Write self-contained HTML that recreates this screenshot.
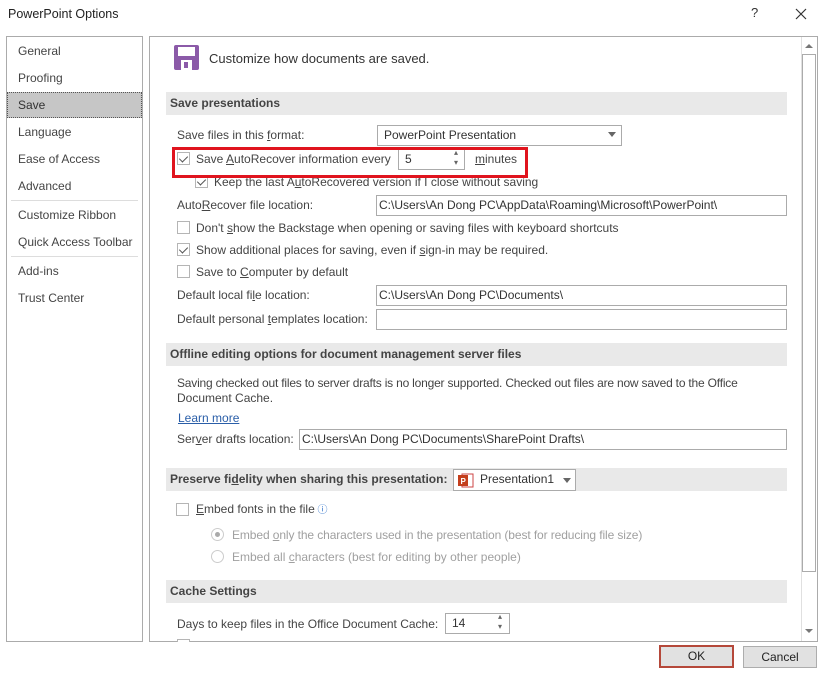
<!DOCTYPE html>
<html><head><meta charset="utf-8"><style>
*{box-sizing:border-box;margin:0;padding:0}
body{width:823px;height:674px;background:#fff;position:relative;overflow:hidden;font-family:"Liberation Sans",sans-serif;font-size:12px;color:#444}
.a{position:absolute;white-space:nowrap;line-height:14px}
.box{position:absolute;border:1px solid #ababab;background:#fff}
.hdr{position:absolute;left:166px;width:621px;height:23px;background:#e9e9e9;font-weight:bold;color:#444;padding-left:4px;line-height:23px;font-size:12px}
.cb{position:absolute;width:13px;height:13px;border:1px solid #b5b5b5;background:#fff}
.cb.on::after{content:"";position:absolute;left:3px;top:1px;width:4px;height:7px;border:solid #555;border-width:0 1px 1px 0;transform:rotate(45deg)}
.rd{position:absolute;width:13px;height:13px;border:1px solid #ccc;border-radius:50%;background:#fff}
.nav{position:absolute;left:18px;font-size:12px;color:#444;line-height:14px}
.inp{position:absolute;border:1px solid #ababab;background:#fff;padding-left:2px;line-height:19px;font-size:12px;color:#333;white-space:nowrap;overflow:hidden}
.g{color:#a0a0a0}
u{text-decoration:underline}
</style></head><body>
<div class="a" style="left:8px;top:7px;font-size:12.5px;color:#222">PowerPoint Options</div>
<div class="a" style="left:751px;top:6px;font-size:13px;color:#333">?</div>
<svg style="position:absolute;left:795px;top:8px" width="12" height="12"><path d="M1 1L11 11M11 1L1 11" stroke="#333" stroke-width="1.2"/></svg>

<div class="box" style="left:6px;top:36px;width:137px;height:606px"></div>
<div class="nav" style="top:44px">General</div>
<div class="nav" style="top:71px">Proofing</div>
<div style="position:absolute;left:7px;top:92px;width:135px;height:26px;background:#c6c6c6;border:1px dotted #555"></div>
<div class="nav" style="top:98px;color:#333">Save</div>
<div class="nav" style="top:125px">Language</div>
<div class="nav" style="top:152px">Ease of Access</div>
<div class="nav" style="top:179px">Advanced</div>
<div style="position:absolute;left:11px;top:200px;width:127px;height:1px;background:#ddd"></div>
<div class="nav" style="top:208px">Customize Ribbon</div>
<div class="nav" style="top:235px">Quick Access Toolbar</div>
<div style="position:absolute;left:11px;top:256px;width:127px;height:1px;background:#ddd"></div>
<div class="nav" style="top:264px">Add-ins</div>
<div class="nav" style="top:291px">Trust Center</div>

<div class="box" style="left:149px;top:36px;width:669px;height:606px"></div>
<div style="position:absolute;left:801px;top:37px;width:16px;height:604px;background:#fff;border-left:1px solid #e0e0e0"></div>
<div style="position:absolute;left:802px;top:54px;width:14px;height:518px;border:1px solid #ababab;background:#fff"></div>
<svg style="position:absolute;left:804px;top:42px" width="10" height="8"><path d="M1 6L5 2L9 6Z" fill="#777"/></svg>
<svg style="position:absolute;left:804px;top:627px" width="10" height="8"><path d="M1 2L5 6L9 2Z" fill="#777"/></svg>

<svg style="position:absolute;left:174px;top:45px" width="25" height="25"><rect x="0" y="0" width="25" height="25" rx="2" fill="#8b5aa8"/><rect x="4" y="2" width="17" height="9" fill="#fff"/><rect x="7" y="15" width="11" height="10" fill="#fff"/><rect x="10" y="17" width="4" height="6" fill="#8b5aa8"/></svg>
<div class="a" style="left:209px;top:52px;font-size:13px;color:#333">Customize how documents are saved.</div>

<div class="hdr" style="top:92px">Save presentations</div>
<div class="a" style="left:177px;top:128px">Save files in this <u>f</u>ormat:</div>
<div class="inp" style="left:377px;top:125px;width:245px;height:21px;padding-left:6px">PowerPoint Presentation</div>
<svg style="position:absolute;left:608px;top:132px" width="9" height="6"><path d="M0 0H8L4 5Z" fill="#666"/></svg>

<div class="cb on" style="left:177px;top:152px"></div>
<div class="a" style="left:196px;top:152px">Save <u>A</u>utoRecover information every</div>
<div class="inp" style="left:398px;top:149px;width:67px;height:21px;padding-left:6px">5</div>
<div class="a" style="left:454px;top:148px;font-size:8px;color:#666;line-height:10px">▴<br>▾</div>
<div class="a" style="left:475px;top:152px"><u>m</u>inutes</div>
<div class="cb on" style="left:195px;top:175px"></div>
<div class="a" style="left:214px;top:175px">Keep the last A<u>u</u>toRecovered version if I close without saving</div>
<div style="position:absolute;left:172px;top:147px;width:356px;height:31px;border:3px solid #e0141e"></div>

<div class="a" style="left:177px;top:198px">Auto<u>R</u>ecover file location:</div>
<div class="inp" style="left:376px;top:195px;width:411px;height:21px">C:\Users\An Dong PC\AppData\Roaming\Microsoft\PowerPoint\</div>
<div class="cb" style="left:177px;top:221px"></div>
<div class="a" style="left:196px;top:221px">Don't <u>s</u>how the Backstage when opening or saving files with keyboard shortcuts</div>
<div class="cb on" style="left:177px;top:243px"></div>
<div class="a" style="left:196px;top:243px">Show additional places for saving, even if <u>s</u>ign-in may be required.</div>
<div class="cb" style="left:177px;top:265px"></div>
<div class="a" style="left:196px;top:265px">Save to <u>C</u>omputer by default</div>
<div class="a" style="left:177px;top:288px">Default local fi<u>l</u>e location:</div>
<div class="inp" style="left:376px;top:285px;width:411px;height:21px">C:\Users\An Dong PC\Documents\</div>
<div class="a" style="left:177px;top:312px">Default personal <u>t</u>emplates location:</div>
<div class="inp" style="left:376px;top:309px;width:411px;height:21px"></div>

<div class="hdr" style="top:343px">Offline editing options for document management server files</div>
<div class="a" style="left:177px;top:376px;letter-spacing:-0.2px">Saving checked out files to server drafts is no longer supported. Checked out files are now saved to the Office</div>
<div class="a" style="left:177px;top:391px">Document Cache.</div>
<div class="a" style="left:178px;top:411px;color:#2a5ea8;text-decoration:underline">Learn more</div>
<div class="a" style="left:177px;top:432px">Ser<u>v</u>er drafts location:</div>
<div class="inp" style="left:299px;top:429px;width:488px;height:21px">C:\Users\An Dong PC\Documents\SharePoint Drafts\</div>

<div class="hdr" style="top:468px">Preserve fi<u>d</u>elity when sharing this presentation:</div>
<div class="inp" style="left:453px;top:469px;width:123px;height:22px;padding-left:26px">Presentation1</div>
<svg style="position:absolute;left:458px;top:472px" width="16" height="16"><rect x="4" y="2" width="11" height="13" fill="#fff" stroke="#c44" stroke-width="1"/><rect x="0" y="3" width="10" height="11" fill="#c43e1c"/><text x="2.5" y="12" font-size="8" fill="#fff" font-family="Liberation Sans" font-weight="bold">P</text></svg>
<svg style="position:absolute;left:563px;top:478px" width="9" height="6"><path d="M0 0H8L4 5Z" fill="#666"/></svg>

<div class="cb" style="left:176px;top:503px"></div>
<div class="a" style="left:196px;top:502px"><u>E</u>mbed fonts in the file<span style="color:#2a6fc9;font-size:10px"> ⓘ</span></div>
<div class="rd" style="left:211px;top:528px"></div><div style="position:absolute;left:215px;top:532px;width:5px;height:5px;border-radius:50%;background:#aaa"></div>
<div class="a g" style="left:232px;top:528px;letter-spacing:-0.1px">Embed <u>o</u>nly the characters used in the presentation (best for reducing file size)</div>
<div class="rd" style="left:211px;top:550px"></div>
<div class="a g" style="left:232px;top:550px">Embed all <u>c</u>haracters (best for editing by other people)</div>

<div class="hdr" style="top:580px">Cache Settings</div>
<div class="a" style="left:177px;top:617px">Days to keep files in the Office Document Cache:</div>
<div class="inp" style="left:445px;top:613px;width:65px;height:21px;padding-left:6px">14</div>
<div class="a" style="left:498px;top:612px;font-size:8px;color:#666;line-height:10px">▴<br>▾</div>
<div class="cb" style="left:177px;top:639px;height:3px;border-bottom:none"></div>

<div style="position:absolute;left:659px;top:645px;width:75px;height:23px;border:2px solid #b5483a;background:#e1e1e1;text-align:center;line-height:19px;color:#222">OK</div>
<div style="position:absolute;left:743px;top:646px;width:74px;height:22px;border:1px solid #adadad;background:#e1e1e1;text-align:center;line-height:20px;color:#222">Cancel</div>
</body></html>
